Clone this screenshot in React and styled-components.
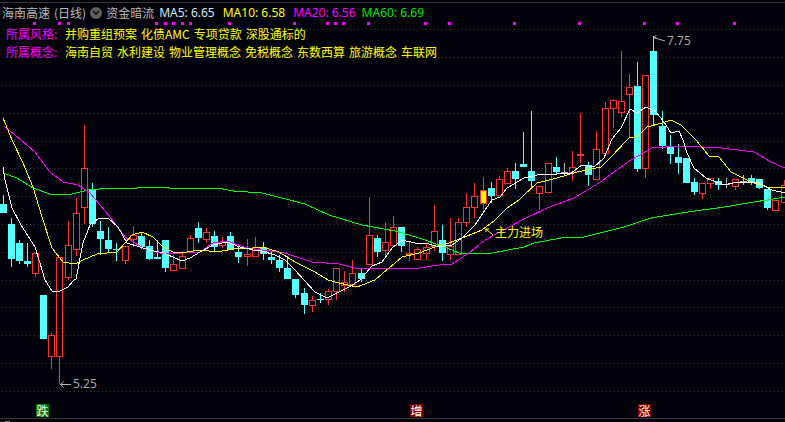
import React from "react";
import styled, { createGlobalStyle } from "styled-components";

const BG = "#02020b";
const CN = '"Noto Sans CJK SC", "Noto Sans", sans-serif';

const Global = createGlobalStyle`
  html, body { margin: 0; padding: 0; background: ${BG}; overflow: hidden; }
  body { font-family: ${CN}; font-size: 12px; }
`;

const Screen = styled.div`
  width: 785px;
  height: 422px;
  padding-top: 2px;
  box-sizing: border-box;
  background: ${BG};
  overflow: hidden;
`;

const ChartFrame = styled.div`
  position: relative;
  width: 785px;
  height: 417px;
  box-sizing: border-box;
  border-top: 1px solid #363636;
  border-bottom: 1px solid #363636;
`;

const Chart = styled.svg`
  display: block;
  width: 785px;
  height: 415px;
`;

const Grip = styled.div`
  width: 5px;
  height: 1px;
  margin: 2px 0 0 5px;
  background: #808080;
`;

const Legend = styled.div`
  position: absolute;
  top: 0;
  left: 0;
  display: flex;
  flex-direction: column;
  line-height: 18px;
  white-space: nowrap;
`;

const TitleRow = styled.div`
  display: flex;
  align-items: center;
  height: 18px;
  margin-top: 1px;
  padding-left: 2px;
  color: #bcbcbc;
`;

const Cycle = styled.span`
  margin-left: 4px;
`;

const Chevron = styled.span`
  display: flex;
  align-items: center;
  justify-content: center;
  width: 12px;
  height: 12px;
  margin-left: 4px;
  border-radius: 50%;
  background: #5e5e5e;
`;

const Flow = styled.span`
  margin-left: 4px;
`;

const MaItem = styled.span`
  color: ${(p) => p.$color};
  margin-left: ${(p) => p.$gap}px;
  font-family: "Noto Sans", sans-serif;
`;

const TagRow = styled.div`
  display: flex;
  height: 18px;
  padding-left: 6px;
  margin-top: ${(p) => p.$top}px;
`;

const TagLabel = styled.span`
  width: 59px;
  color: #ff00ff;
`;

const TagList = styled.div`
  display: flex;
  gap: 4px;
  color: #ffff00;
`;

const PriceLabel = styled.span`
  position: absolute;
  left: ${(p) => p.$x}px;
  top: ${(p) => p.$y}px;
  color: #a8a8a8;
  line-height: 14px;
  font-family: "Noto Sans", sans-serif;
`;

const EntryLabel = styled.span`
  position: absolute;
  left: 495px;
  top: 221px;
  color: #ffff00;
  line-height: 16px;
`;

const Badge = styled.span`
  position: absolute;
  left: ${(p) => p.$x}px;
  top: 401px;
  width: 13px;
  height: 13px;
  display: flex;
  align-items: center;
  justify-content: center;
  background: ${(p) => p.$bg};
  color: #fff;
  font-size: 12px;
  line-height: 13px;
`;

const gridY = [29, 57, 85, 113, 141, 168, 196, 224, 252, 280, 307, 335, 363, 391];
const markX = [34, 59, 68, 156, 165, 173, 182, 190, 229, 294, 327, 335, 343, 368, 425, 449, 514, 579, 644, 677, 734];

// [left, kind, bodyTop, bodyBottom, wickTop, wickBottom]
const candles = [
  [0, "c", 204, 213, 195, 213], [8, "c", 224, 259, 218, 267], [16, "c", 243, 261, 240, 264], [24, "c", 261, 264, 243, 267],
  [32, "r", 253, 274, 253, 277], [40, "c", 295, 339, 295, 339], [48, "r", 335, 357, 333, 369], [56, "r", 257, 357, 257, 384],
  [65, "r", 245, 278, 221, 280], [73, "r", 213, 250, 198, 256], [81, "r", 168, 208, 125, 224], [89, "c", 189, 224, 183, 227],
  [97, "c", 231, 239, 221, 255], [105, "c", 240, 249, 227, 252], [113, "c", 249, 250, 243, 261], [122, "r", 246, 261, 246, 264],
  [130, "r", 235, 240, 226, 247], [138, "c", 236, 247, 232, 249], [146, "c", 246, 259, 240, 260], [154, "c", 257, 259, 240, 259],
  [162, "c", 240, 268, 240, 272], [170, "r", 264, 271, 255, 271], [179, "r", 256, 269, 251, 269], [187, "r", 238, 253, 235, 253],
  [195, "c", 228, 238, 222, 243], [203, "r", 232, 240, 228, 243], [211, "c", 236, 247, 231, 251], [219, "r", 242, 246, 237, 248],
  [227, "c", 236, 250, 232, 250], [235, "c", 252, 257, 246, 263], [244, "r", 254, 257, 239, 266], [252, "r", 247, 257, 237, 257],
  [260, "c", 247, 254, 242, 260], [268, "c", 257, 260, 252, 264], [276, "c", 260, 268, 255, 272], [284, "c", 268, 279, 256, 279],
  [292, "c", 279, 295, 279, 298], [301, "c", 293, 305, 288, 314], [309, "r", 300, 306, 296, 312], [317, "c", 299, 300, 293, 303],
  [325, "r", 291, 300, 289, 305], [333, "r", 268, 292, 268, 300], [341, "r", 282, 286, 271, 292], [349, "r", 273, 285, 260, 285],
  [358, "c", 273, 279, 269, 282], [366, "r", 235, 265, 197, 265], [374, "c", 238, 252, 235, 257], [382, "r", 242, 251, 222, 256],
  [390, "r", 227, 246, 216, 246], [398, "c", 227, 246, 227, 252], [406, "r", 253, 255, 242, 261], [414, "r", 249, 260, 247, 260],
  [423, "r", 247, 254, 244, 260], [431, "r", 231, 247, 205, 251], [439, "c", 240, 253, 225, 261], [447, "r", 246, 255, 218, 260],
  [455, "r", 222, 255, 218, 255], [463, "r", 207, 223, 193, 227], [471, "r", 196, 208, 183, 218], [480, "y", 190, 204, 177, 210],
  [488, "c", 188, 196, 182, 203], [496, "r", 179, 196, 176, 196], [504, "r", 171, 184, 168, 184], [512, "c", 171, 179, 163, 189],
  [520, "c", 164, 167, 132, 167], [528, "c", 171, 181, 111, 188], [536, "r", 186, 194, 186, 210], [545, "r", 163, 193, 163, 193],
  [553, "c", 167, 172, 157, 174], [561, "g", 172, 173, 163, 175], [569, "r", 167, 173, 151, 181], [577, "r", 154, 156, 113, 163],
  [585, "c", 165, 175, 162, 186], [593, "r", 149, 180, 131, 180], [602, "r", 108, 154, 102, 156], [610, "r", 100, 109, 99, 128],
  [618, "r", 101, 113, 51, 117], [626, "r", 87, 95, 74, 138], [634, "c", 86, 169, 62, 172], [642, "r", 75, 169, 75, 178],
  [650, "c", 51, 115, 36, 126], [659, "c", 126, 146, 111, 149], [667, "c", 146, 154, 135, 164], [675, "c", 157, 163, 144, 174],
  [683, "c", 158, 183, 158, 183], [691, "c", 182, 192, 178, 195], [699, "r", 183, 194, 183, 199], [707, "r", 178, 184, 178, 189],
  [715, "c", 181, 185, 178, 190], [723, "g", 184, 185, 178, 188], [732, "r", 179, 187, 179, 190], [740, "g", 181, 182, 175, 185],
  [748, "c", 178, 182, 175, 185], [756, "c", 179, 188, 179, 189], [764, "c", 189, 208, 189, 210], [772, "r", 200, 211, 200, 211],
  [781, "r", 185, 203, 180, 203],
];

const ma5 = "3,167 5,180 12,208 21,225 35,247 40,263 45,280 52,291 60,291 68,287 74,280 76,279 83,243 90,225 98,219 108,218 118,227 127,243 140,247 150,250 163,253 173,257 182,261 190,258 200,252 213,245 227,242 240,247 253,250 262,251 275,255 285,260 295,270 304,280 315,292 327,298 337,293 349,287 360,280 372,266 382,262 392,248 402,240 415,243 429,244 439,247 452,245 462,238 475,225 485,210 492,200 500,197 507,188 524,178 537,175 557,174 571,173 582,165 594,167 604,158 612,139 621,128 630,109 637,113 646,107 656,112 664,122 671,133 679,131 683,140 687,153 694,168 706,178 724,185 737,182 757,182 772,190 785,193";
const ma10 = "3,118 12,140 23,163 33,187 42,217 52,248 63,262 75,264 83,260 97,254 117,252 125,243 132,235 142,232 153,237 163,247 175,253 187,252 200,250 217,252 233,249 253,248 262,247 279,252 295,262 315,272 328,280 339,283 357,287 375,280 389,268 402,257 419,253 435,247 449,243 462,238 482,230 495,220 507,208 519,200 524,195 537,183 557,178 577,172 601,167 611,157 627,140 629,138 637,137 647,127 662,123 671,120 681,125 696,140 709,156 719,157 731,172 751,182 767,187 785,187";
const ma20 = "4,126 21,140 35,152 50,172 63,182 78,185 90,193 110,217 125,237 143,248 163,254 182,253 200,252 213,243 227,241 247,248 262,250 285,253 312,262 339,264 359,269 382,268 419,268 439,265 452,264 469,253 485,240 509,227 524,219 547,208 574,198 599,183 614,172 631,160 652,148 681,146 721,148 754,152 771,162 785,168";
const ma60 = "3,173 17,178 33,188 50,194 72,194 88,190 110,188 137,188 140,187 147,188 155,187 170,188 218,188 233,191 262,193 282,198 305,204 329,215 362,225 395,231 419,238 442,246 459,253 492,253 524,247 534,243 561,238 584,237 624,227 651,218 681,213 724,207 785,197";

const CANDLE = { c: "#54ffff", r: "#ff3232", g: "#b8b8b8", y: "#ff3232" };

function Candle({ d }) {
  const [x, k, t, b, wt, wb] = d;
  const color = CANDLE[k];
  const cx = x + 3.5;
  const wick = (a, z) => (z > a ? <line x1={cx} x2={cx} y1={a} y2={z} stroke={color} /> : null);
  return (
    <g shapeRendering="crispEdges">
      {wick(wt, t)}
      {wick(b, wb)}
      {b - t <= 1 ? (
        <rect x={x} y={t} width={7} height={1} fill={color} />
      ) : k === "c" ? (
        <rect x={x} y={t} width={7} height={b - t} fill={color} />
      ) : (
        <rect x={x + 0.5} y={t + 0.5} width={6} height={b - t - 1} fill={k === "y" ? "#ffff00" : "none"} stroke={color} />
      )}
    </g>
  );
}

export default function App() {
  return (
    <Screen>
      <Global />
      <ChartFrame>
        <Chart viewBox="0 3 785 415">
          {gridY.map((y) => (
            <line key={y} x1="2" x2="785" y1={y + 0.5} y2={y + 0.5} stroke="#3c3c3c" strokeDasharray="1 3" />
          ))}
          {markX.map((x) => (
            <rect key={x} x={x - 1} y={22} width="3" height="3" fill="#ff00ff" />
          ))}
          {candles.map((d) => (
            <Candle key={d[0]} d={d} />
          ))}
          <g fill="none" shapeRendering="crispEdges" strokeWidth="1">
            <polyline points={ma60} stroke="#00ff00" />
            <polyline points={ma20} stroke="#ff00ff" />
            <polyline points={ma10} stroke="#ffff00" />
            <polyline points={ma5} stroke="#ffffff" />
          </g>
          <g fill="none" stroke="#b4b4b4" strokeWidth="1">
            <path d="M60.5 384.5H71M60.5 384.5l3-3M60.5 384.5l3 3" />
            <path d="M653.5 37.5L665 41M653.5 37.5l3-2.5M653.5 37.5l3 .5" />
          </g>
          <path d="M486 229l7 6M486 229h3M486 229v3" fill="none" stroke="#ffff40" strokeWidth="1" />
        </Chart>
        <Legend>
          <TitleRow>
            海南高速 <Cycle>(日线)</Cycle>
            <Chevron>
              <svg width="8" height="6" viewBox="0 0 8 6">
                <path d="M1 1l3 3 3-3" fill="none" stroke="#101010" strokeWidth="1.6" />
              </svg>
            </Chevron>
            <Flow>资金暗流</Flow>
            <MaItem $color="#d4e8f8" $gap={5}>MA5: 6.65</MaItem>
            <MaItem $color="#ffff00" $gap={8}>MA10: 6.58</MaItem>
            <MaItem $color="#ff00ff" $gap={8}>MA20: 6.56</MaItem>
            <MaItem $color="#00e600" $gap={6}>MA60: 6.69</MaItem>
          </TitleRow>
          <TagRow $top={3}>
            <TagLabel>所属风格:</TagLabel>
            <TagList>
              <span>并购重组预案</span>
              <span>化债AMC</span>
              <span>专项贷款</span>
              <span>深股通标的</span>
            </TagList>
          </TagRow>
          <TagRow $top={0}>
            <TagLabel>所属概念:</TagLabel>
            <TagList>
              <span>海南自贸</span>
              <span>水利建设</span>
              <span>物业管理概念</span>
              <span>免税概念</span>
              <span>东数西算</span>
              <span>旅游概念</span>
              <span>车联网</span>
            </TagList>
          </TagRow>
        </Legend>
        <PriceLabel $x={667} $y={31}>7.75</PriceLabel>
        <PriceLabel $x={73} $y={374}>5.25</PriceLabel>
        <EntryLabel>主力进场</EntryLabel>
        <Badge $x={36} $bg="#007a00">跌</Badge>
        <Badge $x={410} $bg="#800000">增</Badge>
        <Badge $x={638} $bg="#800000">涨</Badge>
      </ChartFrame>
      <Grip />
    </Screen>
  );
}
